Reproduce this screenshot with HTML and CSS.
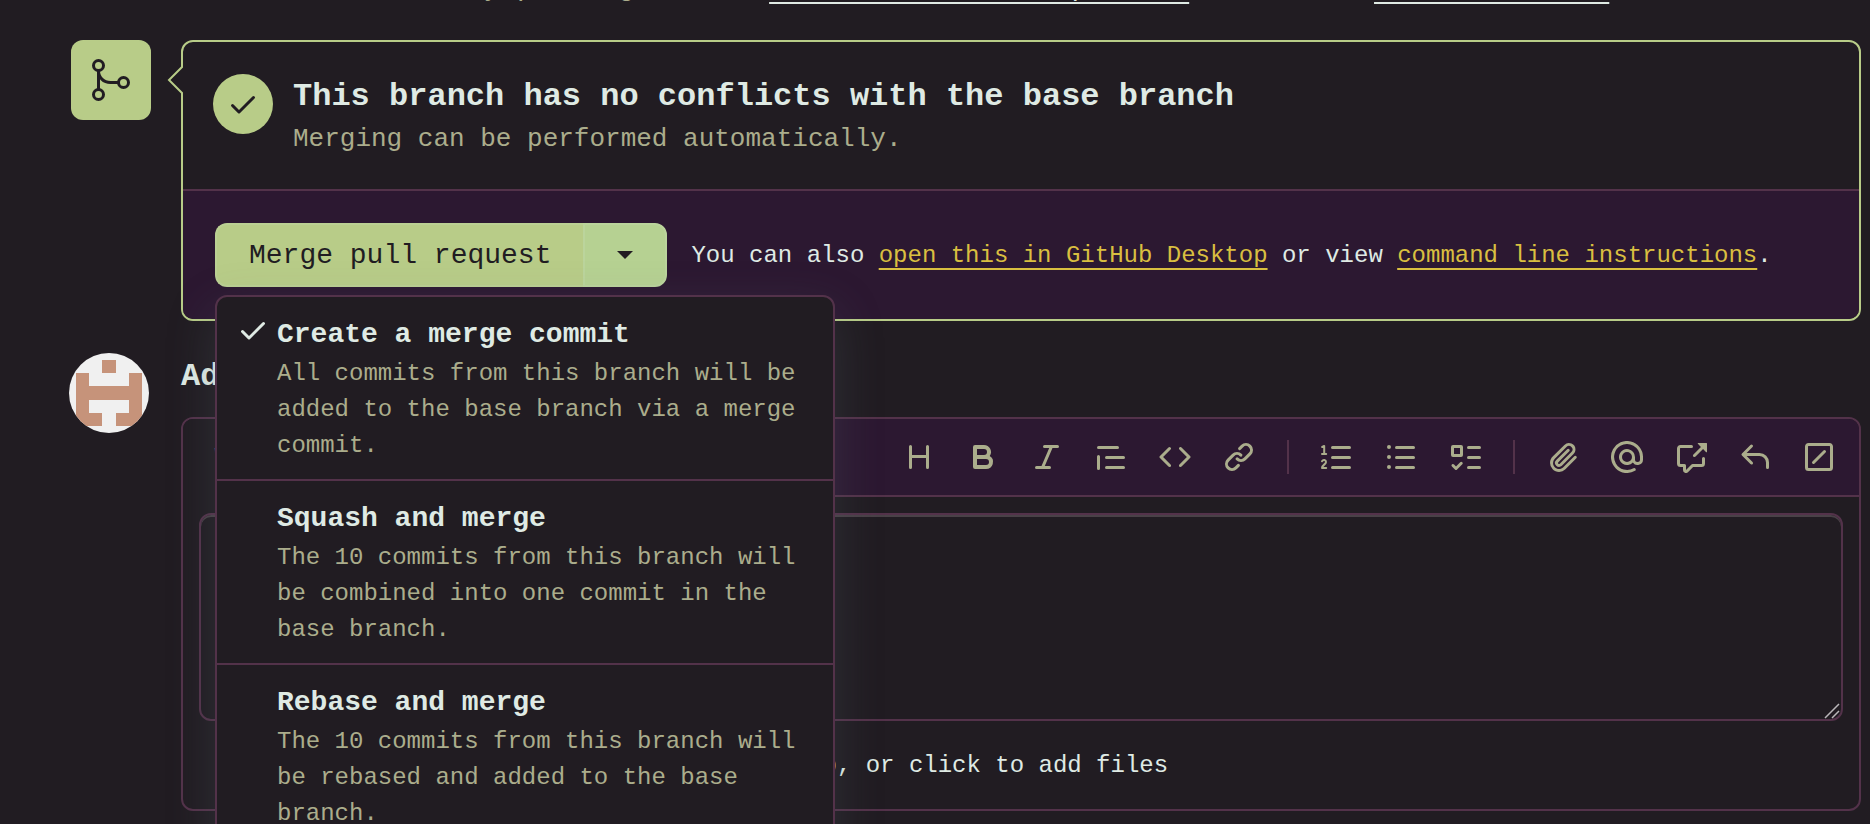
FILE: index.html
```
<!DOCTYPE html>
<html lang="en">
<head>
  <meta charset="UTF-8" />
  <meta name="viewport" content="width=device-width, initial-scale=1.0"/>
  <title>Merge pull request</title>
  <link rel="stylesheet" href="styles.css">
</head>
<body>

  <main class="page">
    <p class="push-note">Add more commits by pushing to the <a href="#">markdown-editor-importers</a> branch on <a href="#">acme-main-site</a>.</p>

    <section class="row">
      <div class="gutter">
        <div class="merge-badge">
          <svg width="48" height="48" viewBox="0 0 24 24" fill="none" stroke="currentColor" stroke-width="1.5">
            <circle cx="5.75" cy="4.75" r="2.5"/>
            <circle cx="5.75" cy="19.25" r="2.5"/>
            <circle cx="18.25" cy="13.25" r="2.5"/>
            <path d="M5.75 7.25v9.5M5.75 7.25c0 3.5 2.5 6 6 6h4"/>
          </svg>
        </div>
      </div>

      <div class="merge-box">
        <svg class="caret" width="16" height="30" viewBox="0 0 16 30">
          <path d="M16 1 2 15l14 14" fill="#211c22" stroke="#b8cc88" stroke-width="2"/>
        </svg>

        <div class="merge-status">
          <div class="status-circle">
            <svg class="icon" viewBox="0 0 16 16"><path d="M13.78 4.22a.75.75 0 0 1 0 1.06l-7.25 7.25a.75.75 0 0 1-1.06 0L2.22 9.28a.751.751 0 0 1 .018-1.042.751.751 0 0 1 1.042-.018L6 10.94l6.72-6.72a.75.75 0 0 1 1.06 0Z"/></svg>
          </div>
          <div>
            <h3>This branch has no conflicts with the base branch</h3>
            <p>Merging can be performed automatically.</p>
          </div>
        </div>

        <div class="merge-actions">
          <div class="btn-group">
            <button type="button" class="btn-merge">Merge pull request</button>
            <button type="button" class="btn-toggle" aria-label="Select merge method" aria-expanded="true">
              <svg width="16" height="8" viewBox="0 0 16 8"><path d="M0 0h16L8 8Z"/></svg>
            </button>

            <div class="menu" role="menu">
              <button type="button" class="menu-item" role="menuitemradio" aria-checked="true">
                <svg class="icon" viewBox="0 0 16 16"><path d="M13.78 4.22a.75.75 0 0 1 0 1.06l-7.25 7.25a.75.75 0 0 1-1.06 0L2.22 9.28a.751.751 0 0 1 .018-1.042.751.751 0 0 1 1.042-.018L6 10.94l6.72-6.72a.75.75 0 0 1 1.06 0Z"/></svg>
                <span class="menu-text">
                  <span class="menu-title">Create a merge commit</span>
                  <span class="menu-desc">All commits from this branch will be added to the base branch via a merge commit.</span>
                </span>
              </button>
              <button type="button" class="menu-item" role="menuitemradio" aria-checked="false">
                <span class="icon"></span>
                <span class="menu-text">
                  <span class="menu-title">Squash and merge</span>
                  <span class="menu-desc">The 10 commits from this branch will be combined into one commit in the base branch.</span>
                </span>
              </button>
              <button type="button" class="menu-item" role="menuitemradio" aria-checked="false">
                <span class="icon"></span>
                <span class="menu-text">
                  <span class="menu-title">Rebase and merge</span>
                  <span class="menu-desc">The 10 commits from this branch will be rebased and added to the base branch.</span>
                </span>
              </button>
            </div>
          </div>
          <p>You can also <a href="#">open this in GitHub Desktop</a> or view <a href="#">command line instructions</a>.</p>
        </div>
      </div>
    </section>

    <section class="row">
      <div class="gutter">
        <svg class="avatar" viewBox="0 0 12 12" shape-rendering="crispEdges">
          <rect width="12" height="12" fill="#f0f0f0"/>
          <path fill="#c6937a" d="M5 1h2v2H5ZM1 3h2v2h6V3h2v8H7V9h2V7H3v2h2v2H1Z"/>
        </svg>
      </div>

      <div class="comment">
        <h3><label for="comment">Add a comment</label></h3>

        <div class="editor">
          <div class="editor-head">
            <button type="button" class="tab active">Write</button>
            <button type="button" class="tab">Preview</button>

            <div class="toolbar" role="toolbar">
              <button type="button" aria-label="Heading"><svg class="icon" viewBox="0 0 16 16"><path d="M3.75 2a.75.75 0 0 1 .75.75V7h7V2.75a.75.75 0 0 1 1.5 0v10.5a.75.75 0 0 1-1.5 0V8.5h-7v4.75a.75.75 0 0 1-1.5 0V2.75A.75.75 0 0 1 3.75 2Z"/></svg></button>
              <button type="button" aria-label="Bold"><svg class="icon" viewBox="0 0 16 16"><path d="M4 2h4.5a3.501 3.501 0 0 1 2.852 5.53A3.499 3.499 0 0 1 9.5 14H4a1 1 0 0 1-1-1V3a1 1 0 0 1 1-1Zm1 7v3h4.5a1.5 1.5 0 0 0 0-3Zm3.5-2a1.5 1.5 0 0 0 0-3H5v3Z"/></svg></button>
              <button type="button" aria-label="Italic"><svg class="icon" viewBox="0 0 16 16"><path d="M6 2.75A.75.75 0 0 1 6.75 2h6.5a.75.75 0 0 1 0 1.5h-2.505l-3.858 9H9.25a.75.75 0 0 1 0 1.5h-6.5a.75.75 0 0 1 0-1.5h2.505l3.858-9H6.75A.75.75 0 0 1 6 2.75Z"/></svg></button>
              <button type="button" aria-label="Quote"><svg class="icon" viewBox="0 0 16 16"><path d="M1.75 2.5h9.5a.75.75 0 0 1 0 1.5h-9.500a.75.75 0 0 1 0-1.5Zm4 5h8.5a.75.75 0 0 1 0 1.5h-8.5a.75.75 0 0 1 0-1.5Zm0 5h8.5a.75.75 0 0 1 0 1.5h-8.5a.75.75 0 0 1 0-1.5ZM2.5 7.75v6a.75.75 0 0 1-1.5 0v-6a.75.75 0 0 1 1.5 0Z"/></svg></button>
              <button type="button" aria-label="Code"><svg class="icon" viewBox="0 0 16 16"><path d="m11.28 3.22 4.25 4.25a.75.75 0 0 1 0 1.06l-4.25 4.25a.749.749 0 0 1-1.275-.326.749.749 0 0 1 .215-.734L13.94 8l-3.72-3.72a.749.749 0 0 1 .326-1.275.749.749 0 0 1 .734.215Zm-6.56 0a.751.751 0 0 1 1.042.018.751.751 0 0 1 .018 1.042L2.06 8l3.72 3.72a.749.749 0 0 1-.326 1.275.749.749 0 0 1-.734-.215L.47 8.53a.75.75 0 0 1 0-1.06Z"/></svg></button>
              <button type="button" aria-label="Link"><svg class="icon" viewBox="0 0 16 16"><path d="m7.775 3.275 1.25-1.25a3.5 3.5 0 1 1 4.95 4.95l-2.5 2.5a3.5 3.5 0 0 1-4.95 0 .751.751 0 0 1 .018-1.042.751.751 0 0 1 1.042-.018 1.998 1.998 0 0 0 2.83 0l2.5-2.5a2.002 2.002 0 0 0-2.83-2.83l-1.25 1.25a.751.751 0 0 1-1.042-.018.751.751 0 0 1-.018-1.042Zm-4.69 9.64a1.998 1.998 0 0 0 2.83 0l1.25-1.25a.751.751 0 0 1 1.042.018.751.751 0 0 1 .018 1.042l-1.25 1.25a3.5 3.5 0 1 1-4.95-4.95l2.5-2.5a3.5 3.5 0 0 1 4.95 0 .751.751 0 0 1-.018 1.042.751.751 0 0 1-1.042.018 1.998 1.998 0 0 0-2.83 0l-2.5 2.5a1.998 1.998 0 0 0 0 2.83Z"/></svg></button>
              <span class="divider"></span>
              <button type="button" aria-label="Numbered list"><svg class="icon" viewBox="0 0 16 16"><path d="M5 3.25a.75.75 0 0 1 .75-.75h8.5a.75.75 0 0 1 0 1.5h-8.5A.75.75 0 0 1 5 3.25Zm0 5a.75.75 0 0 1 .75-.75h8.5a.75.75 0 0 1 0 1.5h-8.5A.75.75 0 0 1 5 8.25Zm0 5a.75.75 0 0 1 .75-.75h8.5a.75.75 0 0 1 0 1.5h-8.5a.75.75 0 0 1-.75-.75Z"/><path d="M.6 3 1.6 2.5v4M.5 6.5h2.1M.5 10.1c.6-.9 2-.7 2 .4 0 1.200-2 1.500-2 3h2.100" fill="none" stroke="currentColor" stroke-linecap="round" stroke-linejoin="round"/></svg></button>
              <button type="button" aria-label="Bulleted list"><svg class="icon" viewBox="0 0 16 16"><path d="M5.75 2.5h8.5a.75.75 0 0 1 0 1.5h-8.5a.75.75 0 0 1 0-1.5Zm0 5h8.5a.75.75 0 0 1 0 1.5h-8.5a.75.75 0 0 1 0-1.5Zm0 5h8.5a.75.75 0 0 1 0 1.5h-8.5a.75.75 0 0 1 0-1.5ZM2 14a1 1 0 1 1 0-2 1 1 0 0 1 0 2Zm1-6a1 1 0 1 1-2 0 1 1 0 0 1 2 0ZM2 4a1 1 0 1 1 0-2 1 1 0 0 1 0 2Z"/></svg></button>
              <button type="button" aria-label="Task list"><svg class="icon" viewBox="0 0 16 16"><path d="M2 2h4a1 1 0 0 1 1 1v4a1 1 0 0 1-1 1H2a1 1 0 0 1-1-1V3a1 1 0 0 1 1-1Zm4.655 8.595a.75.75 0 0 1 0 1.06L4.03 14.28a.75.75 0 0 1-1.06 0l-1.5-1.5a.749.749 0 0 1 .326-1.275.749.749 0 0 1 .734.215l.97.97 2.095-2.095a.75.75 0 0 1 1.06 0ZM9.75 2.5h5.5a.75.75 0 0 1 0 1.5h-5.5a.75.75 0 0 1 0-1.5Zm0 5h5.5a.75.75 0 0 1 0 1.5h-5.5a.75.75 0 0 1 0-1.5Zm0 5h5.5a.75.75 0 0 1 0 1.5h-5.5a.75.75 0 0 1 0-1.5Zm-7.25-9v3h3v-3Z"/></svg></button>
              <span class="divider"></span>
              <button type="button" aria-label="Attach files"><svg class="icon" viewBox="0 0 16 16"><path d="M12.212 3.02a1.753 1.753 0 0 0-2.478.003l-5.83 5.83a3.007 3.007 0 0 0-.88 2.127c0 .795.315 1.551.88 2.116.567.567 1.333.89 2.126.89.79 0 1.548-.321 2.116-.89l5.48-5.48a.75.75 0 0 1 1.061 1.06l-5.48 5.48a4.492 4.492 0 0 1-3.177 1.33c-1.2 0-2.345-.487-3.187-1.33a4.483 4.483 0 0 1-1.32-3.177c0-1.195.475-2.341 1.32-3.186l5.83-5.83a3.25 3.25 0 0 1 5.553 2.297c0 .863-.343 1.691-.953 2.301L7.439 12.39c-.375.377-.884.59-1.416.593a1.998 1.998 0 0 1-1.412-.593 1.992 1.992 0 0 1 0-2.828l5.48-5.48a.751.751 0 0 1 1.042.018.751.751 0 0 1 .018 1.042l-5.48 5.48a.492.492 0 0 0 0 .707.499.499 0 0 0 .352.154.51.51 0 0 0 .356-.154l5.833-5.827a1.755 1.755 0 0 0 0-2.481Z"/></svg></button>
              <button type="button" aria-label="Mention"><svg class="icon" viewBox="0 0 16 16"><path d="M4.75 2.37a6.501 6.501 0 0 0 6.5 11.26.75.75 0 0 1 .75 1.298A7.999 7.999 0 0 1 .989 4.148 8 8 0 0 1 16 7.75v1.5a2.75 2.75 0 0 1-5.072 1.475 3.999 3.999 0 0 1-6.65-4.19A4 4 0 0 1 12 8v1.25a1.25 1.25 0 0 0 2.5 0V7.867a6.5 6.5 0 0 0-9.75-5.496ZM10.5 8a2.5 2.5 0 1 0-5 0 2.5 2.5 0 0 0 5 0Z"/></svg></button>
              <button type="button" aria-label="Reference"><svg class="icon" viewBox="0 0 16 16"><path d="M2.75 3.5a.25.25 0 0 0-.25.25v7.5c0 .138.112.25.25.25h2a.75.75 0 0 1 .75.75v2.19l2.72-2.72a.749.749 0 0 1 .53-.22h4.5a.25.25 0 0 0 .25-.25v-2.5a.75.75 0 0 1 1.5 0v2.5A1.75 1.75 0 0 1 13.25 13H9.06l-2.573 2.573A1.458 1.458 0 0 1 4 14.543V13H2.75A1.75 1.75 0 0 1 1 11.25v-7.5C1 2.784 1.784 2 2.75 2h5.5a.75.75 0 0 1 0 1.5ZM16 1.25v4.146a.25.25 0 0 1-.427.177L14.03 4.03l-3.75 3.75a.749.749 0 0 1-1.275-.326.749.749 0 0 1 .215-.734l3.75-3.75-1.543-1.543A.25.25 0 0 1 11.604 1h4.146a.25.25 0 0 1 .25.25Z"/></svg></button>
              <button type="button" aria-label="Saved replies"><svg class="icon" viewBox="0 0 16 16"><path d="M6.78 1.97a.75.75 0 0 1 0 1.06L3.81 6h6.44A4.75 4.75 0 0 1 15 10.75v2.5a.75.75 0 0 1-1.5 0v-2.5a3.25 3.25 0 0 0-3.25-3.25H3.81l2.97 2.97a.749.749 0 0 1-.326 1.275.749.749 0 0 1-.734-.215L1.47 7.28a.75.75 0 0 1 0-1.06l4.25-4.25a.75.75 0 0 1 1.06 0Z"/></svg></button>
              <button type="button" aria-label="Slash commands"><svg class="icon" viewBox="0 0 16 16"><path d="M13.25 1c.966 0 1.75.784 1.75 1.75v10.5A1.75 1.75 0 0 1 13.25 15H2.75A1.75 1.75 0 0 1 1 13.25V2.75C1 1.784 1.784 1 2.75 1ZM2.75 2.5a.25.25 0 0 0-.25.25v10.5c0 .138.112.25.25.25h10.5a.25.25 0 0 0 .25-.25V2.75a.25.25 0 0 0-.25-.25Z"/><path d="m5.250 10.750 5.500-5.500" stroke="currentColor" stroke-width="1.500" stroke-linecap="round"/></svg></button>
            </div>
          </div>

          <div class="text-wrap">
            <textarea id="comment"></textarea>
            <svg class="grip" width="16" height="16" viewBox="0 0 16 16"><path d="M1 15 15 1M8 15l7-7" fill="none" stroke="#b9b6b9" stroke-width="1.500"/></svg>
          </div>

          <div class="editor-foot">
            <a href="#">Markdown is supported</a>
            <button type="button">Paste, drop, or click to add files</button>
          </div>
        </div>
      </div>
    </section>
  </main>

</body>
</html>
```
FILE: styles.css
```
* {
  box-sizing: border-box;
}

body {
  font-family: 'Liberation Mono', monospace;
  font-size: 24px;
  background: #211c22;
  color: #dfeae4;
  margin: 0;
  height: 100vh;
  overflow: hidden;
}

h3, p {
  margin: 0;
}

h3 {
  font-size: 32px;
  line-height: 48px;
}

button {
  font-family: inherit;
  color: inherit;
  background: none;
  border: none;
  padding: 0;
  cursor: pointer;
}

svg {
  display: block;
  fill: currentColor;
}

a {
  color: #d9bf40;
  text-decoration: underline;
  text-decoration-thickness: 2px;
  text-decoration-skip-ink: none;
  text-underline-offset: 6px;
}

.icon {
  width: 32px;
  height: 32px;
  flex-shrink: 0;
}

.page {
  padding: 0 9px 0 69px;
}

/* scrolled partly out of view */
.push-note {
  margin: -33px 0 31px 112px;
  font-size: 28px;
  line-height: 42px;
  color: #abad8c;
}

.push-note a {
  color: #dfeae4;
  text-underline-offset: 7px;
}

.row {
  display: flex;
  margin-bottom: 32px;
}

.gutter {
  width: 112px;
  flex-shrink: 0;
}

/* merge box */
.merge-badge {
  display: flex;
  align-items: center;
  justify-content: center;
  width: 80px;
  height: 80px;
  margin-left: 2px;
  background: #b8cc88;
  color: #211c22;
  border-radius: 12px;
}

.merge-badge svg {
  fill: none;
}

.merge-box {
  position: relative;
  flex: 1;
  border: 2px solid #b8cc88;
  border-radius: 12px;
}

.caret {
  position: absolute;
  top: 23px;
  left: -16px;
}

.merge-status {
  display: flex;
  gap: 20px;
  padding: 32px 30px 31px;
}

.merge-status h3 {
  line-height: 46px;
}

.merge-status p {
  font-size: 26px;
  line-height: 38px;
  color: #abad8c;
}

.status-circle {
  display: flex;
  align-items: center;
  justify-content: center;
  width: 60px;
  height: 60px;
  border-radius: 50%;
  background: #b8cc88;
  color: #211c22;
}

.merge-actions {
  display: flex;
  align-items: center;
  gap: 24px;
  padding: 32px;
  background: #2c1831;
  border-top: 2px solid #53324a;
  border-radius: 0 0 10px 10px;
}

.btn-group {
  position: relative;
  display: flex;
  height: 64px;
  color: #211c22;
}

.btn-merge {
  padding: 0 32px;
  font-size: 28px;
  background: #b8cc88;
  border: 2px solid #bbd093;
  border-right: none;
  border-radius: 12px 0 0 12px;
}

.btn-toggle {
  display: flex;
  align-items: center;
  justify-content: center;
  width: 84px;
  background: #b6d192;
  border: 2px solid #bbd49c;
  border-radius: 0 12px 12px 0;
}

/* merge method menu */
.menu {
  position: absolute;
  top: calc(100% + 8px);
  left: 0;
  z-index: 10;
  width: 620px;
  background: #211c22;
  border: 2px solid #53324a;
  border-radius: 12px;
  color: #dfeae4;
  box-shadow: 0 16px 48px rgba(90, 110, 120, 0.25);
}

.menu-item {
  display: flex;
  gap: 8px;
  width: 100%;
  padding: 17px 32px 15px 20px;
  text-align: left;
}

.menu-item + .menu-item {
  border-top: 2px solid #53324a;
}

.menu-title {
  display: block;
  font-size: 28px;
  line-height: 42px;
  font-weight: bold;
}

.menu-desc {
  display: block;
  font-size: 24px;
  line-height: 36px;
  color: #abad8c;
}

/* comment form */
.avatar {
  width: 80px;
  height: 80px;
  border-radius: 50%;
}

.comment {
  flex: 1;
}

.editor {
  margin-top: 16px;
  border: 2px solid #53324a;
  border-radius: 12px;
}

.editor-head {
  display: flex;
  background: #2c1831;
  border-bottom: 2px solid #53324a;
  border-radius: 10px 10px 0 0;
}

.tab {
  height: 76px;
  padding: 0 32px;
  font-size: 28px;
  color: #abad8c;
}

.tab.active {
  margin-bottom: -2px;
  height: 78px;
  color: #dfeae4;
  background: #211c22;
  border-right: 2px solid #53324a;
  border-radius: 10px 0 0 0;
}

.toolbar {
  display: flex;
  align-items: center;
  margin-left: auto;
  padding-right: 8px;
  color: #abad8c;
}

.toolbar button {
  padding: 16px;
}

.divider {
  width: 2px;
  height: 34px;
  margin: 0 16px;
  background: #53324a;
}

.text-wrap {
  position: relative;
  padding: 16px 16px 0;
}

textarea {
  display: block;
  width: 100%;
  height: 208px;
  padding: 16px;
  font: inherit;
  color: inherit;
  background: #211c22;
  border: 2px solid #53324a;
  border-radius: 12px;
  box-shadow: inset 0 2px 0 #494147;
  resize: none;
}

.grip {
  position: absolute;
  right: 19px;
  bottom: 2px;
}

.editor-foot {
  display: flex;
  align-items: center;
  gap: 161px;
  height: 88px;
  padding: 0 32px;
}

.editor-foot a {
  color: inherit;
  text-decoration: none;
}

.editor-foot button {
  font-size: 24px;
}
```
